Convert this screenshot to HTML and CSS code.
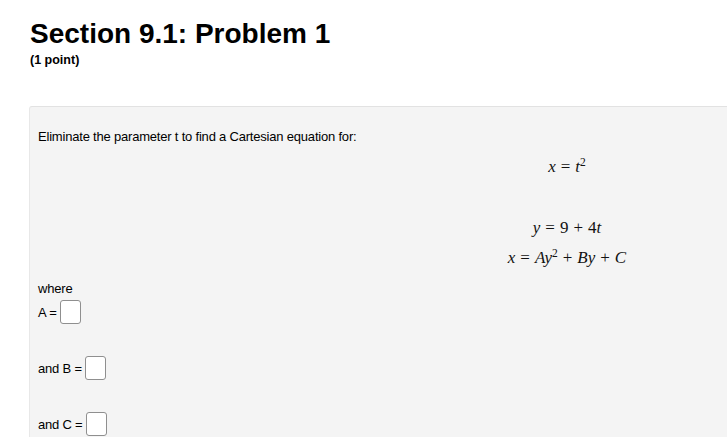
FILE: index.html
```html
<!DOCTYPE html>
<html>
<head>
<meta charset="utf-8">
<link rel="stylesheet" href="styles.css">
</head>
<body>
<div class="page">
  <h1 class="title">Section 9.1: Problem 1</h1>
  <div class="points">(1 point)</div>
  <div class="panel">
    <p class="intro">Eliminate the parameter t to find a Cartesian equation for:</p>
    <div class="math m1"><i>x</i><span class="op">=</span><i>t</i><sup>2</sup></div>
    <div class="math m2"><i>y</i><span class="op">=</span>9<span class="op">+</span>4<i>t</i></div>
    <div class="math m3"><i>x</i><span class="op">=</span><i>Ay</i><sup>2</sup><span class="op">+</span><i>By</i><span class="op">+</span><i>C</i></div>
    <div class="where">where</div>
    <div class="ans a1">A =<span class="box"></span></div>
    <div class="ans a2">and B =<span class="box"></span></div>
    <div class="ans a3">and C =<span class="box"></span></div>
  </div>
</div>
</body>
</html>
```
FILE: styles.css
```css
html, body {
  margin: 0;
  padding: 0;
  background: #fff;
}
body {
  font-family: "Liberation Sans", Arial, sans-serif;
  color: #000;
  height: 437px;
  overflow: hidden;
}
.page {
  padding: 18px 0 0 30px;
}
.title {
  font-size: 28px;
  font-weight: bold;
  margin: 0;
  line-height: 32px;
}
.points {
  font-size: 12.5px;
  font-weight: bold;
  line-height: 14px;
  margin-top: 3px;
}
.panel {
  margin-top: 39px;
  margin-left: -1px;
  background: #f4f4f4;
  border-top: 1px solid #e2e2e2;
  border-left: 1px solid #e8e8e8;
  border-radius: 3px 0 0 0;
  padding: 22px 0 1px 8px;
}
.intro {
  margin: 0;
  font-size: 13px;
  letter-spacing: -0.2px;
  line-height: 16px;
}
.math {
  font-family: "Liberation Serif", "Times New Roman", serif;
  font-size: 17px;
  text-align: center;
  line-height: 20px;
  padding-left: 369px;
  color: #111;
}
.math i { font-style: italic; }
.math sup { font-size: 11.5px; vertical-align: 6px; line-height: 0; }
.op { margin: 0 5px; }
.m1 { margin-top: 12px; }
.m2 { margin-top: 41px; }
.m3 { margin-top: 10px; }
.where {
  font-size: 13px;
  letter-spacing: -0.2px;
  margin-top: 13px;
  line-height: 16px;
}
.ans {
  font-size: 13px;
  letter-spacing: -0.2px;
  display: flex;
  align-items: center;
  gap: 3px;
  height: 24px;
}
.a1 { margin-top: 3px; }
.a2 { margin-top: 32px; }
.a3 { margin-top: 32px; }
.box {
  display: inline-block;
  width: 19px;
  height: 22px;
  background: #fff;
  border: 1px solid #8f8f8f;
  border-radius: 3px;
}
```
